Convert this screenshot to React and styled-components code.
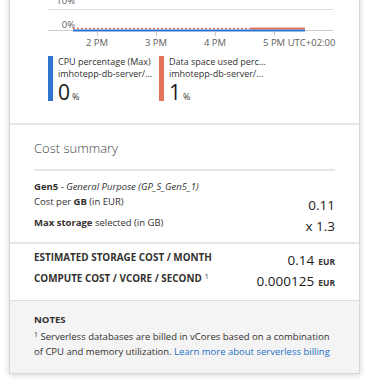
import React from "react";
import styled, { createGlobalStyle } from "styled-components";

const GlobalStyle = createGlobalStyle`
  html, body {
    margin: 0;
    padding: 0;
    background: #ffffff;
  }
  body {
    font-family: "Open Sans", "Noto Sans", sans-serif;
    color: #323130;
    -webkit-font-smoothing: antialiased;
  }
`;

const Page = styled.div`
  width: 379px;
  height: 389px;
  overflow: hidden;
`;

const Card = styled.div`
  box-sizing: border-box;
  width: 351px;
  margin: -13px 0 0 9px;
  background: #ffffff;
  border: 1px solid #d6d6d6;
  box-shadow: 0 1px 6px rgba(0, 0, 0, 0.18);
  display: flex;
  flex-direction: column;
`;

const ChartSection = styled.div`
  padding: 0 0 22px 38px;
  border-bottom: 2px solid #e6e6e6;
`;

const Chart = styled.svg`
  display: block;
  width: 288px;
  height: 62px;
  overflow: visible;
`;

const Legend = styled.div`
  display: flex;
  margin-top: 6px;
`;

const LegendItem = styled.div`
  display: flex;
  gap: 5px;
  width: 111px;
  height: 45px;
`;

const LegendBar = styled.div`
  width: 5px;
  flex-shrink: 0;
  background: ${(p) => p.color};
`;

const LegendText = styled.div`
  display: flex;
  flex-direction: column;
  width: 97px;
  min-width: 0;
`;

const LegendLine = styled.div`
  font-size: 9px;
  line-height: 12px;
  height: 12px;
  color: #323130;
  white-space: nowrap;
  overflow-x: clip;
  overflow-y: visible;
  text-overflow: ellipsis;
`;

const LegendValue = styled.div`
  margin-top: 1px;
  font-size: 21px;
  line-height: 22px;
  color: #1b1a19;
  span {
    font-size: 9px;
    margin-left: 2px;
    color: #323130;
  }
`;

const CostSection = styled.div`
  padding: 14px 24px 6px;
  border-bottom: 2px solid #e6e6e6;
`;

const SummaryTitle = styled.div`
  font-size: 13px;
  font-weight: 300;
  line-height: 18px;
  color: #444444;
  padding-bottom: 12px;
  border-bottom: 2px solid #e6e6e6;
`;

const TierLine = styled.div`
  margin-top: 8px;
  font-size: 9.5px;
  line-height: 15px;
  b {
    font-weight: 700;
  }
  i {
    font-style: italic;
  }
`;

const Row = styled.div`
  display: flex;
  justify-content: space-between;
  align-items: flex-start;
  height: 21px;
`;

const RowLabel = styled.div`
  font-size: ${(p) => (p.caps ? "9.9px" : "9.5px")};
  font-weight: ${(p) => (p.caps ? 700 : 400)};
  text-transform: ${(p) => (p.caps ? "uppercase" : "none")};
  line-height: ${(p) => (p.caps ? "14px" : "16px")};
  color: #323130;
  white-space: nowrap;
  b {
    font-weight: 700;
  }
  sup {
    font-size: 7px;
    font-weight: 400;
    vertical-align: baseline;
    position: relative;
    top: -3px;
    margin-left: 3px;
  }
`;

const RowValue = styled.div`
  font-size: 13.5px;
  line-height: ${(p) => (p.offset ? "19px" : "20px")};
  padding-top: ${(p) => (p.offset ? "2px" : "0")};
  color: #1b1a19;
  white-space: nowrap;
`;

const Unit = styled.span`
  font-size: 8.5px;
  font-weight: 700;
  margin-left: 4px;
  color: #323130;
`;

const TotalsSection = styled.div`
  padding: 6px 24px 8px;
`;

const Notes = styled.div`
  background: #f4f4f4;
  border-top: 1px solid #dedede;
  padding: 12px 24px 15px;
`;

const NotesTitle = styled.div`
  font-size: 9.6px;
  font-weight: 700;
  line-height: 14px;
  color: #323130;
`;

const NotesText = styled.div`
  margin-top: 3px;
  font-size: 9.5px;
  line-height: 13.5px;
  color: #323130;
  sup {
    font-size: 7px;
    vertical-align: baseline;
    position: relative;
    top: -3px;
  }
  a {
    color: #1f6fc5;
    text-decoration: none;
  }
`;

const BLUE = "#2f74d0";
const ORANGE = "#e5725b";

const ticks = [
  { x: 97, label: "2 PM" },
  { x: 156, label: "3 PM" },
  { x: 215, label: "4 PM" },
];

const MetricChart = () => (
  <Chart viewBox="48 -12 288 62">
    <text x="75" y="4" textAnchor="end" fontSize="9.5" fill="#605e5c">10%</text>
    <line x1="48" x2="333" y1="9.5" y2="9.5" stroke="#dcdcdc" strokeWidth="1" />
    <text x="75" y="28" textAnchor="end" fontSize="9.5" fill="#605e5c">0%</text>
    <line x1="48" x2="333" y1="30.5" y2="30.5" stroke="#cfcfcf" strokeWidth="1" />
    <line x1="73" x2="251" y1="28.5" y2="28.5" stroke={ORANGE} strokeWidth="1.5" strokeDasharray="2 2" />
    <line x1="251" x2="305" y1="28.5" y2="28.5" stroke={ORANGE} strokeWidth="2" />
    <line x1="73" x2="305" y1="30.5" y2="30.5" stroke={BLUE} strokeWidth="2" />
    {[...ticks, { x: 274 }].map((t) => (
      <line key={t.x} x1={t.x + 0.5} x2={t.x + 0.5} y1="31" y2="36" stroke="#c8c8c8" />
    ))}
    {ticks.map((t) => (
      <text key={t.label} x={t.x} y="46" textAnchor="middle" fontSize="9.5" fill="#605e5c">
        {t.label}
      </text>
    ))}
    <text x="263" y="46" fontSize="9.5" fill="#605e5c">5 PM UTC+02:00</text>
  </Chart>
);

const legend = [
  { color: BLUE, title: "CPU percentage (Max)", value: "0" },
  { color: ORANGE, title: "Data space used percentage (Max)", value: "1" },
];

const App = () => {
  return (
    <Page>
      <GlobalStyle />
      <Card>
        <ChartSection>
          <MetricChart />
          <Legend>
            {legend.map((l) => (
              <LegendItem key={l.title}>
                <LegendBar color={l.color} />
                <LegendText>
                  <LegendLine>{l.title}</LegendLine>
                  <LegendLine>imhotepp-db-server/workspace</LegendLine>
                  <LegendValue>
                    {l.value}
                    <span>%</span>
                  </LegendValue>
                </LegendText>
              </LegendItem>
            ))}
          </Legend>
        </ChartSection>

        <CostSection>
          <SummaryTitle>Cost summary</SummaryTitle>
          <TierLine>
            <b>Gen5</b> - <i>General Purpose (GP_S_Gen5_1)</i>
          </TierLine>
          <Row>
            <RowLabel>
              Cost per <b>GB</b> (in EUR)
            </RowLabel>
            <RowValue offset>0.11</RowValue>
          </Row>
          <Row>
            <RowLabel>
              <b>Max storage</b> selected (in GB)
            </RowLabel>
            <RowValue offset>x 1.3</RowValue>
          </Row>
        </CostSection>

        <TotalsSection>
          <Row>
            <RowLabel caps>Estimated storage cost / month</RowLabel>
            <RowValue>
              0.14<Unit>EUR</Unit>
            </RowValue>
          </Row>
          <Row>
            <RowLabel caps>
              Compute cost / vCore / second<sup>1</sup>
            </RowLabel>
            <RowValue>
              0.000125<Unit>EUR</Unit>
            </RowValue>
          </Row>
        </TotalsSection>

        <Notes>
          <NotesTitle>NOTES</NotesTitle>
          <NotesText>
            <sup>1</sup> Serverless databases are billed in vCores based on a combination of CPU and
            memory utilization. <a href="#billing">Learn more about serverless billing</a>
          </NotesText>
        </Notes>
      </Card>
    </Page>
  );
};

export default App;
